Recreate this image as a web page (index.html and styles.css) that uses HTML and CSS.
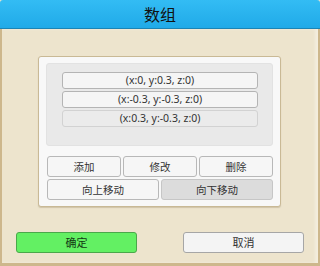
FILE: index.html
```html
<!DOCTYPE html>
<html>
<head>
<meta charset="utf-8">
<link rel="stylesheet" href="styles.css">
</head>
<body>
<div class="window">
  <div class="header">数组</div>
  <div class="body">
    <div class="panel">
      <div class="list">
        <div class="item">(x:0, y:0.3, z:0)</div>
        <div class="item">(x:-0.3, y:-0.3, z:0)</div>
        <div class="item selected">(x:0.3, y:-0.3, z:0)</div>
      </div>
      <div class="row three">
        <div class="btn">添加</div>
        <div class="btn">修改</div>
        <div class="btn">删除</div>
      </div>
      <div class="row two">
        <div class="btn">向上移动</div>
        <div class="btn pressed">向下移动</div>
      </div>
    </div>
    <div class="actions">
      <div class="action ok">确定</div>
      <div class="action cancel">取消</div>
    </div>
  </div>
</div>
</body>
</html>
```
FILE: styles.css
```css
* { box-sizing: border-box; }
html, body { margin: 0; padding: 0; }
body {
  width: 320px;
  height: 266px;
  overflow: hidden;
  font-family: "Noto Sans", "Noto Sans CJK SC", sans-serif;
  color: #333;
}
.window {
  width: 320px;
  height: 266px;
  display: flex;
  flex-direction: column;
  background: #ede4cd;
}
.header {
  height: 29px;
  flex: none;
  background: linear-gradient(#33bcf4, #20aae8);
  border-bottom: 1px solid #1b84b5;
  border-radius: 3px 3px 0 0;
  text-align: center;
  font-family: "Noto Sans CJK SC", sans-serif;
  font-size: 16px;
  line-height: 28px;
  color: #111;
}
.body {
  flex: 1;
  border-left: 2px solid #cdb78c;
  border-right: 2px solid #cdb78c;
  border-bottom: 3px solid #cdb78c;
  box-shadow: inset -3px 0 3px rgba(255,255,255,0.35);
  padding: 27px 37px 0 36px;
}
.panel {
  width: 243px;
  background: #f8f8f8;
  border: 1px solid #c9b995;
  border-radius: 3px;
  padding: 6px 7px 6px 7px;
  box-shadow: 0 1px 1px rgba(120,100,60,0.25);
}
.list {
  height: 83px;
  background: #e9e9e9;
  border: 1px solid #e2e2e2;
  border-radius: 3px;
  padding: 8px 14px 0 15px;
  display: flex;
  flex-direction: column;
  gap: 2px;
}
.item {
  height: 17px;
  background: #f5f5f5;
  border: 1px solid #b4b4b4;
  border-radius: 3px;
  font-size: 10.5px;
  line-height: 15px;
  text-align: center;
  color: #333;
}
.item.selected {
  background: #ebebeb;
  border-color: #d2d2d2;
}
.row {
  display: grid;
  gap: 2px;
}
.row.three {
  grid-template-columns: 1fr 1fr 1fr;
  margin-top: 10px;
  margin-left: 1px;
}
.row.two {
  grid-template-columns: 1fr 1fr;
  margin-top: 2px;
  margin-left: 1px;
}
.btn {
  height: 21px;
  background: #f6f6f6;
  border: 1px solid #b8b8b8;
  border-radius: 3px;
  font-family: "Noto Sans CJK SC", sans-serif;
  font-size: 10.5px;
  line-height: 19px;
  text-align: center;
  color: #333;
}
.btn.pressed {
  background: #dcdcdc;
  border-color: #c6c6c6;
}
.actions {
  display: flex;
  justify-content: space-between;
  margin-top: 25px;
  margin-left: -22px;
  margin-right: -23px;
}
.action {
  width: 121px;
  height: 21px;
  border-radius: 3px;
  font-family: "Noto Sans CJK SC", sans-serif;
  font-size: 11px;
  line-height: 19px;
  text-align: center;
}
.action.ok {
  background: #63f063;
  border: 1px solid #4aa84a;
  color: #143814;
}
.action.cancel {
  background: #f4f4f4;
  border: 1px solid #a6a6a6;
  color: #333;
}
```
